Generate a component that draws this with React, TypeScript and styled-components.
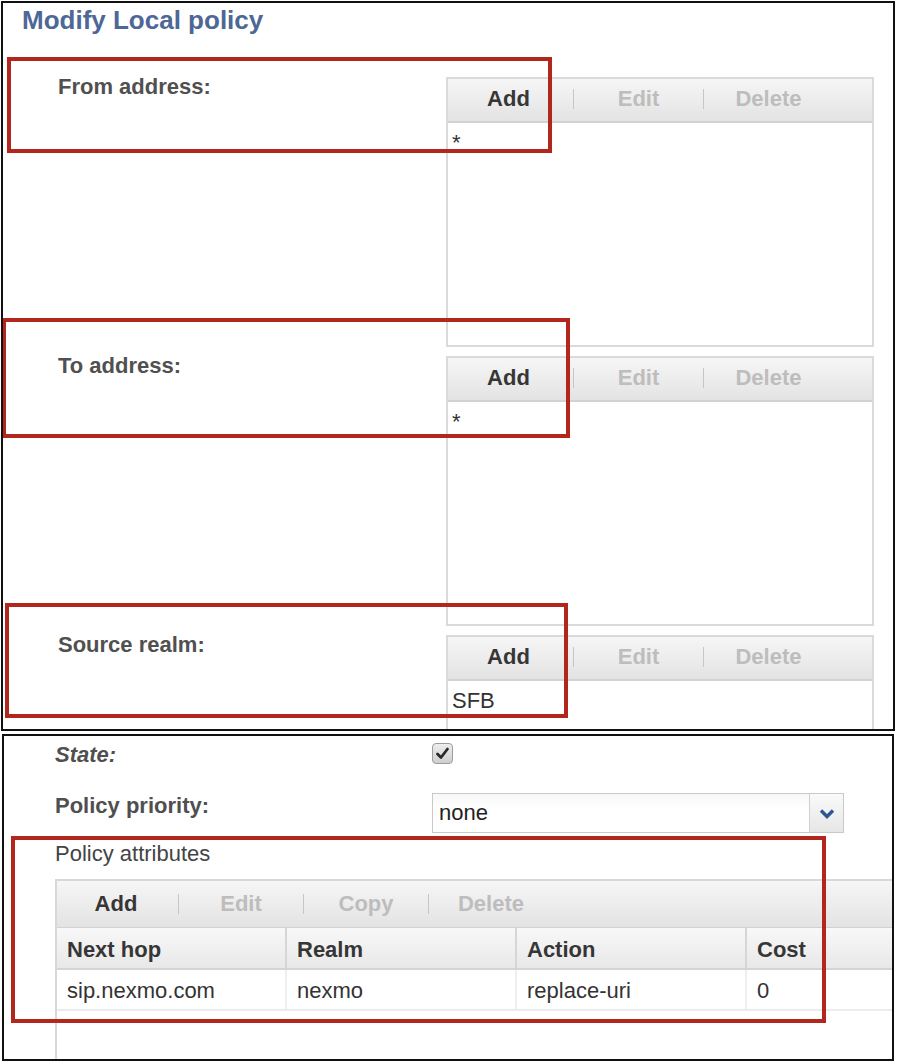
import React from 'react';
import styled, { createGlobalStyle } from 'styled-components';

const GlobalStyle = createGlobalStyle`
  html, body {
    margin: 0;
    padding: 0;
    background: #fff;
  }
  body {
    font-family: "Liberation Sans", Arial, sans-serif;
  }
`;

const Page = styled.div`
  width: 900px;
  height: 1064px;
  box-sizing: border-box;
  padding: 1px 0 0 1px;
  display: flex;
  flex-direction: column;
  gap: 3px;
  overflow: hidden;
`;

const Frame = styled.div<{ $w: number; $h: number; $ml?: number; $pl?: number }>`
  position: relative;
  box-sizing: border-box;
  flex-shrink: 0;
  width: ${(p) => p.$w}px;
  height: ${(p) => p.$h}px;
  margin-left: ${(p) => p.$ml ?? 0}px;
  padding-left: ${(p) => p.$pl ?? 0}px;
  border: 2px solid #111;
  background: #fff;
  overflow: hidden;
`;

const Title = styled.div`
  margin: 2px 0 0 19px;
  font-size: 26px;
  line-height: 30px;
  font-weight: bold;
  color: #4d6796;
`;

const Sections = styled.div`
  margin-top: 42px;
  display: flex;
  flex-direction: column;
  gap: 9px;
`;

const FieldRow = styled.div`
  display: grid;
  grid-template-columns: 443px 428px;
  align-items: start;
`;

const FieldLabel = styled.div`
  padding-left: 55px;
  font-size: 22px;
  line-height: 20px;
  font-weight: bold;
  color: #505050;
`;

const ListBox = styled.div`
  box-sizing: border-box;
  width: 428px;
  height: 270px;
  border: 2px solid #dadada;
  display: flex;
  flex-direction: column;
  background: #fff;
`;

const Toolbar = styled.div<{ $h: number; $pb: number; $bb: number }>`
  box-sizing: border-box;
  flex-shrink: 0;
  height: ${(p) => p.$h}px;
  padding-bottom: ${(p) => p.$pb}px;
  border-bottom: ${(p) => p.$bb}px solid #d2d2d2;
  display: flex;
  align-items: center;
  background: linear-gradient(#f6f6f6, #e3e3e3);
`;

const ToolButton = styled.div<{ $w: number; $off?: boolean }>`
  flex-shrink: 0;
  width: ${(p) => p.$w}px;
  text-align: center;
  font-size: 22px;
  line-height: 26px;
  font-weight: bold;
  color: ${(p) => (p.$off ? '#bdbdbd' : '#363636')};
`;

const ToolSep = styled.div<{ $m: number }>`
  flex-shrink: 0;
  width: 1px;
  height: 20px;
  margin: 0 ${(p) => p.$m}px;
  background: #c6c6c6;
`;

const ListBody = styled.div`
  flex: 1;
  padding: 5px 0 0 4px;
`;

const ListItem = styled.div`
  font-size: 22px;
  line-height: 30px;
  color: #333;
`;

const Callout = styled.div<{ $x: number; $y: number; $w: number; $h: number }>`
  position: absolute;
  left: ${(p) => p.$x}px;
  top: ${(p) => p.$y}px;
  width: ${(p) => p.$w}px;
  height: ${(p) => p.$h}px;
  box-sizing: border-box;
  border: 4px solid #b3261e;
  pointer-events: none;
`;

const FormRow = styled.div<{ $mt: number }>`
  margin-top: ${(p) => p.$mt}px;
  display: grid;
  grid-template-columns: 377px auto;
  align-items: start;
`;

const FormLabel = styled.div<{ $lh: number; $pt: number; $italic?: boolean }>`
  font-size: 22px;
  line-height: ${(p) => p.$lh}px;
  padding-top: ${(p) => p.$pt}px;
  font-weight: bold;
  font-style: ${(p) => (p.$italic ? 'italic' : 'normal')};
  color: #4f4f4f;
`;

const CheckBox = styled.div`
  box-sizing: border-box;
  width: 21px;
  height: 21px;
  border: 1px solid #9c9c9c;
  border-radius: 4px;
  background: linear-gradient(#ededed, #cfcfcf);
  display: flex;
  align-items: center;
  justify-content: center;
`;

const Select = styled.div`
  box-sizing: border-box;
  width: 412px;
  height: 40px;
  border: 1px solid #c9c9c9;
  display: flex;
  background: linear-gradient(#f7f7f7, #fff 40%);
`;

const SelectValue = styled.div`
  flex: 1;
  padding-left: 6px;
  font-size: 22px;
  line-height: 38px;
  color: #222;
`;

const SelectButton = styled.div`
  width: 33px;
  border-left: 1px solid #d0d0d0;
  background: linear-gradient(#fafafa, #e6e6e6);
  display: flex;
  align-items: center;
  justify-content: center;
`;

const Caption = styled.div`
  margin-top: 8px;
  font-size: 22px;
  line-height: 26px;
  color: #444;
`;

const Table = styled.div`
  margin-top: 12px;
  width: 900px;
  height: 240px;
  box-sizing: border-box;
  border-left: 2px solid #d8d8d8;
  border-top: 2px solid #d8d8d8;
  display: flex;
  flex-direction: column;
`;

const HeadRow = styled.div`
  box-sizing: border-box;
  height: 42px;
  display: grid;
  grid-template-columns: 230px 230px 230px 1fr;
  border-bottom: 2px solid #d4d4d4;
  background: linear-gradient(#f8f8f8, #e8e8e8);
`;

const HeadCell = styled.div`
  padding: 4px 0 0 10px;
  font-size: 22px;
  line-height: 36px;
  font-weight: bold;
  color: #363636;
  border-right: 2px solid #d6d6d6;
  &:last-child {
    border-right: none;
  }
`;

const DataRow = styled.div`
  box-sizing: border-box;
  height: 41px;
  display: grid;
  grid-template-columns: 230px 230px 230px 1fr;
  border-bottom: 2px solid #ececec;
`;

const DataCell = styled.div`
  padding: 3px 0 0 10px;
  font-size: 22px;
  line-height: 36px;
  color: #333;
  border-right: 2px solid #efefef;
  &:last-child {
    border-right: none;
  }
`;

type ListField = { label: string; items: string[] };

const fields: ListField[] = [
  { label: 'From address:', items: ['*'] },
  { label: 'To address:', items: ['*'] },
  { label: 'Source realm:', items: ['SFB'] },
];

const columns = ['Next hop', 'Realm', 'Action', 'Cost'];
const rows = [['sip.nexmo.com', 'nexmo', 'replace-uri', '0']];

const ListToolbar = () => (
  <Toolbar $h={44} $pb={2} $bb={2}>
    <ToolButton $w={121}>Add</ToolButton>
    <ToolSep $m={4} />
    <ToolButton $w={121} $off>
      Edit
    </ToolButton>
    <ToolSep $m={4} />
    <ToolButton $w={121} $off>
      Delete
    </ToolButton>
  </Toolbar>
);

const Check = () => (
  <svg width="15" height="15" viewBox="0 0 15 15">
    <path d="M2.5 8 L6 11.5 L12.5 3" fill="none" stroke="#2a2a2a" strokeWidth="2.8" strokeLinecap="round" strokeLinejoin="round" />
  </svg>
);

const Chevron = () => (
  <svg width="16" height="11" viewBox="0 0 16 11">
    <path d="M2 2.5 L8 8.5 L14 2.5" fill="none" stroke="#2f5592" strokeWidth="3.4" strokeLinejoin="miter" />
  </svg>
);

const App = () => (
  <>
    <GlobalStyle />
    <Page>
      <Frame $w={894} $h={730}>
        <Title>Modify Local policy</Title>
        <Sections>
          {fields.map((f) => (
            <FieldRow key={f.label}>
              <FieldLabel>{f.label}</FieldLabel>
              <ListBox>
                <ListToolbar />
                <ListBody>
                  {f.items.map((it) => (
                    <ListItem key={it}>{it}</ListItem>
                  ))}
                </ListBody>
              </ListBox>
            </FieldRow>
          ))}
        </Sections>
        <Callout $x={4} $y={54} $w={545} $h={96} />
        <Callout $x={-1} $y={315} $w={568} $h={120} />
        <Callout $x={2} $y={600} $w={563} $h={115} />
      </Frame>

      <Frame $w={892} $h={327} $ml={1} $pl={51}>
        <FormRow $mt={7}>
          <FormLabel $lh={21} $pt={1} $italic>
            State:
          </FormLabel>
          <CheckBox>
            <Check />
          </CheckBox>
        </FormRow>
        <FormRow $mt={28}>
          <FormLabel $lh={22} $pt={2}>
            Policy priority:
          </FormLabel>
          <Select>
            <SelectValue>none</SelectValue>
            <SelectButton>
              <Chevron />
            </SelectButton>
          </Select>
        </FormRow>
        <Caption>Policy attributes</Caption>
        <Table>
          <Toolbar $h={47} $pb={0} $bb={1}>
            <ToolButton $w={118}>Add</ToolButton>
            <ToolSep $m={3} />
            <ToolButton $w={118} $off>
              Edit
            </ToolButton>
            <ToolSep $m={3} />
            <ToolButton $w={118} $off>
              Copy
            </ToolButton>
            <ToolSep $m={3} />
            <ToolButton $w={118} $off>
              Delete
            </ToolButton>
          </Toolbar>
          <HeadRow>
            {columns.map((c) => (
              <HeadCell key={c}>{c}</HeadCell>
            ))}
          </HeadRow>
          {rows.map((r) => (
            <DataRow key={r[0]}>
              {r.map((v, i) => (
                <DataCell key={i}>{v}</DataCell>
              ))}
            </DataRow>
          ))}
        </Table>
        <Callout $x={7} $y={100} $w={815} $h={187} />
      </Frame>
    </Page>
  </>
);

export default App;
